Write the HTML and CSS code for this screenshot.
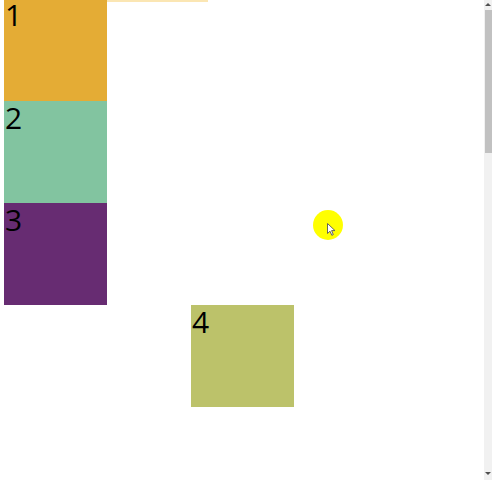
FILE: index.html
```html
<!DOCTYPE html>
<html lang="en">
<head>
    <meta charset="UTF-8">
    <meta name="viewport" content="width=device-width, initial-scale=1.0">
    <title>Boxes</title>
    <link rel="stylesheet" href="styles.css">
</head>
<body>
    <div class="stage">
        <div class="row">
            <div class="box one">1</div>
            <div class="strip"></div>
        </div>
        <div class="box two">2</div>
        <div class="box three">3</div>
        <div class="box four">4</div>
    </div>

    <div class="pointer">
        <svg width="9" height="13" viewBox="0 0 9 13">
            <path d="M0.5 0.5 L0.5 10.5 L3 8.2 L4.8 12.3 L6.3 11.6 L4.6 7.6 L8 7.6 Z" fill="#fff" stroke="#555" stroke-width="0.9" stroke-linejoin="round"/>
        </svg>
    </div>

    <div class="scrollbar">
        <span class="arrow up"></span>
        <div class="thumb"></div>
        <span class="arrow down"></span>
    </div>
</body>
</html>
```

FILE: styles.css
```css
body {
    margin: 0;
    font-family: 'Open Sans', 'Noto Sans', sans-serif;
    background-color: #ffffff;
}
.stage {
    padding-left: 4px;
    display: flex;
    flex-direction: column;
}
.row {
    display: flex;
    align-items: flex-start;
}
.strip {
    width: 101px;
    height: 2px;
    background-color: #fbe6b3;
}
.box {
    width: 103px;
    height: 102px;
    font-size: 30px;
    line-height: 34px;
    color: #000;
    padding-left: 1px;
    box-sizing: border-box;
}
.one {
    height: 101px;
    line-height: 30px;
    background-color: #e4ac35;
}
.two {
    background-color: #82c4a0;
}
.three {
    background-color: #672c72;
}
.four {
    margin-left: 187px;
    background-color: #bcc26a;
}
.pointer {
    position: absolute;
    left: 313px;
    top: 210px;
    width: 30px;
    height: 30px;
    border-radius: 50%;
    background-color: #ffff00;
}
.pointer svg {
    position: absolute;
    left: 14px;
    top: 13px;
}
.scrollbar {
    position: fixed;
    top: 0;
    right: 0;
    width: 8px;
    height: 480px;
    background-color: #f1f1f1;
    display: flex;
    flex-direction: column;
    align-items: center;
}
.arrow {
    width: 0;
    height: 0;
    border-left: 3px solid transparent;
    border-right: 3px solid transparent;
}
.up {
    margin-top: 3px;
    border-bottom: 3px solid #505050;
}
.down {
    margin-top: auto;
    margin-bottom: 5px;
    border-top: 3px solid #505050;
}
.thumb {
    margin-top: 4px;
    width: 7px;
    height: 143px;
    background-color: #c1c1c1;
}
```
